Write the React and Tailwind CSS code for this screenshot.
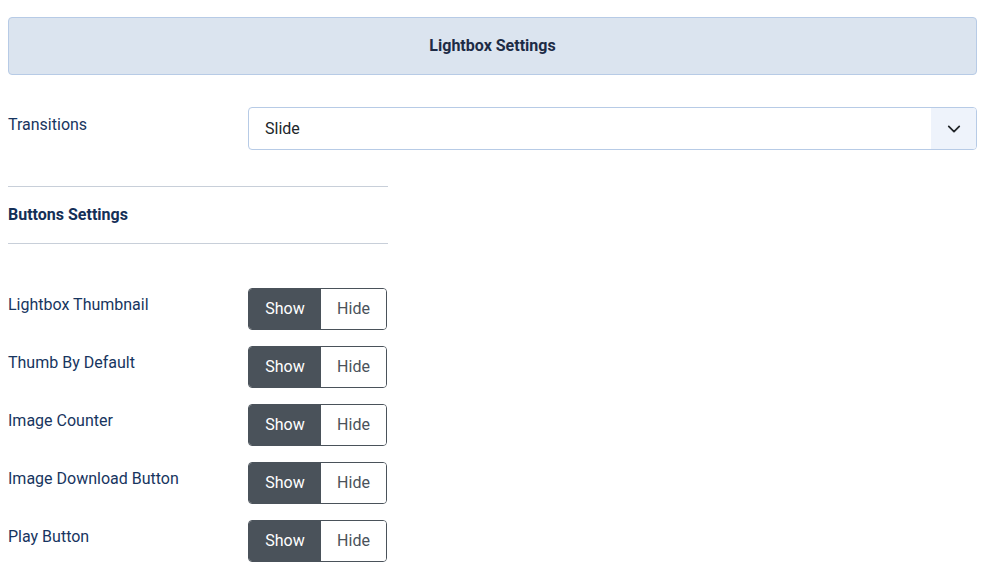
import React, { useState } from 'react';

const rows = [
  'Lightbox Thumbnail',
  'Thumb By Default',
  'Image Counter',
  'Image Download Button',
  'Play Button',
];

const Toggle = ({ value, onChange }) => (
  <div className="flex h-[42px] w-[139px] rounded-[4px] border border-[#4a525a] overflow-hidden text-[16px]">
    <button
      onClick={() => onChange(true)}
      className={`w-[72px] flex items-center justify-center ${value ? 'bg-[#4a525a] text-white' : 'bg-white text-[#4a525a]'}`}
    >
      Show
    </button>
    <button
      onClick={() => onChange(false)}
      className={`flex-1 flex items-center justify-center ${!value ? 'bg-[#4a525a] text-white' : 'bg-white text-[#4a525a]'}`}
    >
      Hide
    </button>
  </div>
);

const App = () => {
  const [values, setValues] = useState(rows.map(() => true));

  return (
    <div className="min-h-screen bg-white px-2 pt-[17px] font-['Roboto',sans-serif] text-[#173560]">
      <div className="h-[58px] mr-[13px] flex items-center justify-center rounded-[4px] border border-[#b7cbe6] bg-[#dbe4ef]">
        <h2 className="text-[16px] font-bold text-[#1d2b45]">Lightbox Settings</h2>
      </div>

      <div className="flex mt-[32px] mr-[13px]">
        <label className="w-[240px] pt-[6px] text-[16px]">Transitions</label>
        <div className="flex-1 flex h-[43px] rounded-[4px] border border-[#b7cbe6] overflow-hidden">
          <div className="flex-1 flex items-center pl-4 text-[16px] text-[#212529]">Slide</div>
          <div className="w-[45px] flex items-center justify-center bg-[#eef3fb]">
            <svg width="14" height="14" viewBox="0 0 16 16" fill="none" stroke="#212529" strokeWidth="2" strokeLinecap="round" strokeLinejoin="round">
              <path d="M2 5l6 6 6-6" />
            </svg>
          </div>
        </div>
      </div>

      <div className="w-[380px] mt-[36px] border-t border-[#c8cfd9]">
        <h3 className="h-[56px] flex items-center text-[16px] font-bold text-[#142f57]">Buttons Settings</h3>
      </div>
      <div className="w-[380px] border-t border-[#c8cfd9]"></div>

      <div className="mt-[44px] flex flex-col gap-4">
        {rows.map((row, i) => (
          <div key={row} className="flex">
            <label className="w-[240px] pt-[5px] text-[16px]">{row}</label>
            <Toggle
              value={values[i]}
              onChange={(v) => setValues((prev) => prev.map((x, j) => (j === i ? v : x)))}
            />
          </div>
        ))}
      </div>
    </div>
  );
};

export default App;
